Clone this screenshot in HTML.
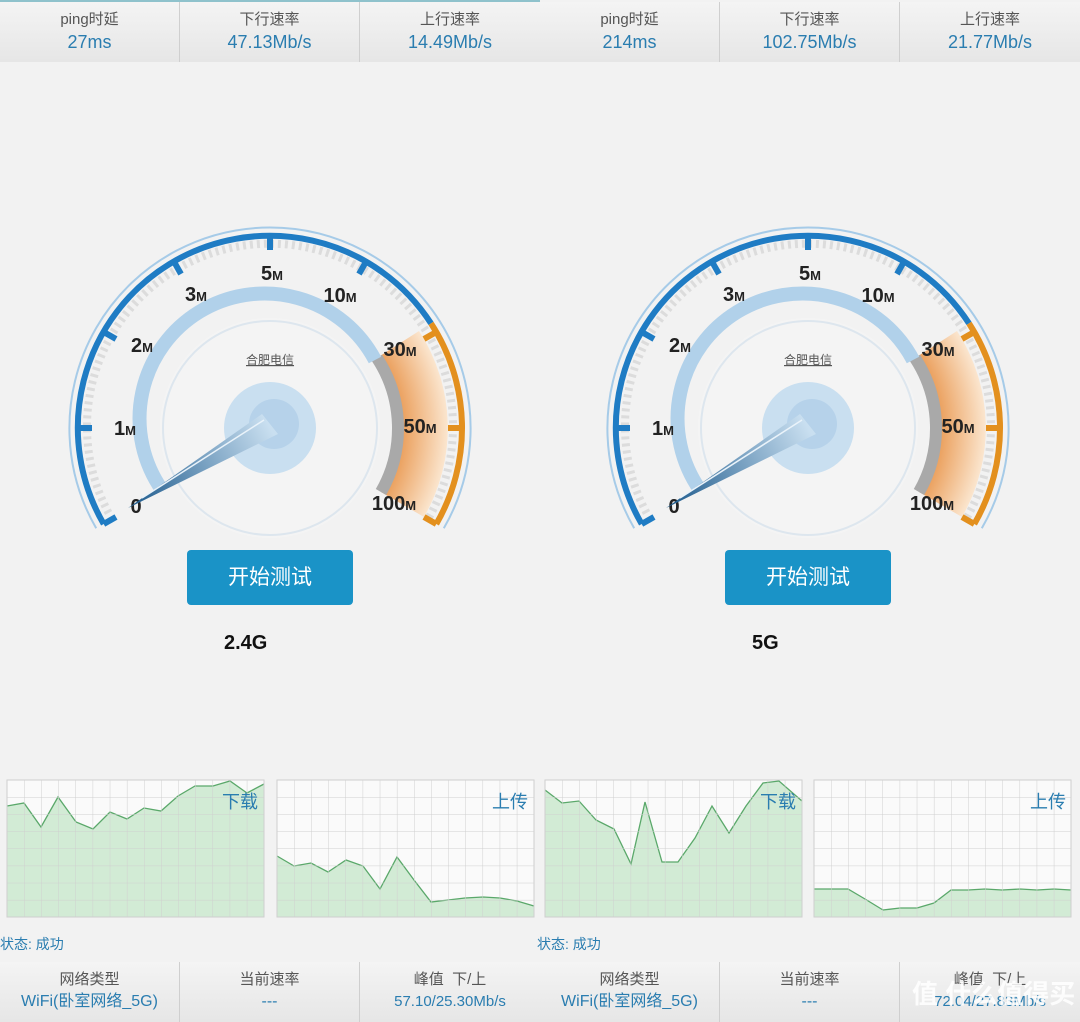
<!DOCTYPE html>
<html><head><meta charset="utf-8"><style>
body{margin:0;width:1080px;height:1021px;background:#f2f2f2;position:relative;overflow:hidden;font-family:"Liberation Sans","Noto Sans CJK SC",sans-serif}
.bar{position:absolute;left:0;width:1080px;height:60px;background:linear-gradient(#f4f4f4,#e6e6e6);display:flex}
.bar>div{width:180px;height:60px;text-align:center;border-right:1px solid #cfcfcf;box-sizing:border-box;padding-top:7px}
.bar>div:nth-child(3),.bar>div:nth-child(6){border-right:none}
.bar .l{color:#555;font-size:15px;line-height:21px}
.bar .v{color:#2a7db0;font-size:18px;line-height:24px}
.btn{position:absolute;top:550px;width:166px;height:55px;background:#1a93c7;border-radius:4px;color:#fff;font-size:21px;text-align:center;line-height:55px}
.lab{position:absolute;top:632px;font-size:20px;font-weight:bold;color:#111}
.st{position:absolute;top:934px;font-size:14px;color:#2a7db0}
.cl{position:absolute;top:788px;font-size:18px;color:#2a7db0}
</style></head><body>
<div style="position:absolute;left:0;top:0;width:540px;height:2px;background:#8fc2cc"></div>
<div class="bar" style="top:2px">
<div><div class="l">ping时延</div><div class="v">27ms</div></div>
<div><div class="l">下行速率</div><div class="v">47.13Mb/s</div></div>
<div><div class="l">上行速率</div><div class="v">14.49Mb/s</div></div>
<div><div class="l">ping时延</div><div class="v">214ms</div></div>
<div><div class="l">下行速率</div><div class="v">102.75Mb/s</div></div>
<div><div class="l">上行速率</div><div class="v">21.77Mb/s</div></div>
</div>

<svg width="1080" height="560" style="position:absolute;left:0;top:0">
<defs>
<radialGradient id="og" cx="0" cy="0" r="178" gradientUnits="userSpaceOnUse"><stop offset="0.7" stop-color="#e8944a"/><stop offset="1" stop-color="#fbe6cf"/></radialGradient>
<linearGradient id="nd" x1="0" y1="0" x2="-140" y2="78" gradientUnits="userSpaceOnUse"><stop offset="0" stop-color="#c9dff0"/><stop offset="1" stop-color="#1d5a8c"/></linearGradient>
<g id="gg">
<path d="M-173.8 100.3 A200.6 200.6 0 1 1 173.8 100.3" fill="none" stroke="#a6cbe8" stroke-width="2"/>
<path d="M-158 91 A183 183 0 1 1 158 91" fill="none" stroke="#dcdcdc" stroke-width="8" stroke-dasharray="3 4"/>
<path d="M149 -97 A178 178 0 0 1 154 89 L111 64 A128 128 0 0 0 107 -70Z" fill="url(#og)"/>
<path d="M107 -70 A128 128 0 0 1 111 64" fill="none" stroke="#a9a9a9" stroke-width="12"/>
<path d="M-108 62 A125 125 0 1 1 105 -68" fill="none" stroke="#b1d1ea" stroke-width="14"/>
<circle r="110" fill="#f4f4f4"/>
<circle r="107" fill="none" stroke="#dde6ee" stroke-width="2"/>
<path d="M-166.3 96 A192 192 0 0 1 161 -104.6" fill="none" stroke="#1f7cc4" stroke-width="6"/>
<path d="M161 -104.6 A192 192 0 0 1 166.3 96" fill="none" stroke="#e3901e" stroke-width="6"/>
<g stroke="#1f7cc4" stroke-width="6">
<line x1="-166.3" y1="96" x2="-154" y2="89"/><line x1="-192" y1="0" x2="-178" y2="0"/><line x1="-166.3" y1="-96" x2="-154" y2="-89"/><line x1="-96" y1="-166.3" x2="-89" y2="-154"/><line x1="0" y1="-192" x2="0" y2="-178"/><line x1="96" y1="-166.3" x2="89" y2="-154"/></g>
<g stroke="#e3901e" stroke-width="6"><line x1="166.3" y1="-96" x2="154" y2="-89"/><line x1="192" y1="0" x2="178" y2="0"/><line x1="166.3" y1="96" x2="154" y2="89"/></g>
<g font-family="Liberation Sans" font-weight="bold" font-size="20" fill="#222" text-anchor="middle">
<text x="-134" y="85">0</text>
<text x="-145" y="7">1<tspan font-size="13">M</tspan></text>
<text x="-128" y="-76">2<tspan font-size="13">M</tspan></text>
<text x="-74" y="-127">3<tspan font-size="13">M</tspan></text>
<text x="2" y="-148">5<tspan font-size="13">M</tspan></text>
<text x="70" y="-126">10<tspan font-size="13">M</tspan></text>
<text x="130" y="-72">30<tspan font-size="13">M</tspan></text>
<text x="150" y="5">50<tspan font-size="13">M</tspan></text>
<text x="124" y="82">100<tspan font-size="13">M</tspan></text>
</g>
<text x="0" y="-64" font-size="12" fill="#555" text-anchor="middle" text-decoration="underline" font-family="Noto Sans CJK SC">合肥电信</text>
<circle r="46" fill="#c9dff0"/><circle r="25" cx="4" cy="-4" fill="#b6d2ea"/>
<polygon points="-142,80 -8,-14 8,6" fill="url(#nd)"/>
<line x1="-128" y1="70" x2="-6" y2="-8" stroke="#eaf3fa" stroke-width="1.5"/>
</g>
</defs>
<use href="#gg" x="270" y="428"/>
<use href="#gg" x="808" y="428"/>
</svg>

<div class="btn" style="left:187px">开始测试</div>
<div class="btn" style="left:725px">开始测试</div>
<div class="lab" style="left:224px">2.4G</div>
<div class="lab" style="left:752px">5G</div>

<svg width="1080" height="150" style="position:absolute;left:0;top:775px">
<defs><pattern id="gr" width="17.13" height="17.13" patternUnits="userSpaceOnUse" x="0" y="0"><path d="M0 0H17.13M0 0V17.13" fill="none" stroke="#cfcfcf" stroke-width="1"/></pattern></defs>
<g transform="translate(7,5)">
<rect width="257" height="137" fill="#fafafa"/>
<polygon points="0,137 0,26 17,23 34,47 51,17 69,42 86,49 103,32 120,39 137,28 154,31 171,16 188,6 206,6 223,1 240,13 257,4 257,137" fill="#d2ebd5"/>
<polyline points="0,26 17,23 34,47 51,17 69,42 86,49 103,32 120,39 137,28 154,31 171,16 188,6 206,6 223,1 240,13 257,4" fill="none" stroke="#5aa86a" stroke-width="1.3"/>
<rect width="257" height="137" fill="url(#gr)" stroke="#cfcfcf"/>
</g>
<g transform="translate(277,5)">
<rect width="257" height="137" fill="#fafafa"/>
<polygon points="0,137 0,76 17,86 34,83 51,92 69,80 86,86 103,109 120,77 137,100 154,122 171,120 188,118 206,117 223,118 240,121 257,126 257,137" fill="#d2ebd5"/>
<polyline points="0,76 17,86 34,83 51,92 69,80 86,86 103,109 120,77 137,100 154,122 171,120 188,118 206,117 223,118 240,121 257,126" fill="none" stroke="#5aa86a" stroke-width="1.3"/>
<rect width="257" height="137" fill="url(#gr)" stroke="#cfcfcf"/>
</g>
<g transform="translate(545,5)">
<rect width="257" height="137" fill="#fafafa"/>
<polygon points="0,137 0,10 17,23 34,21 51,40 69,49 86,84 100,22 117,82 133,82 150,58 167,26 184,53 201,26 218,3 234,1 250,15 257,21 257,137" fill="#d2ebd5"/>
<polyline points="0,10 17,23 34,21 51,40 69,49 86,84 100,22 117,82 133,82 150,58 167,26 184,53 201,26 218,3 234,1 250,15 257,21" fill="none" stroke="#5aa86a" stroke-width="1.3"/>
<rect width="257" height="137" fill="url(#gr)" stroke="#cfcfcf"/>
</g>
<g transform="translate(814,5)">
<rect width="257" height="137" fill="#fafafa"/>
<polygon points="0,137 0,109 17,109 34,109 51,119 69,130 86,128 103,128 120,123 137,110 154,110 171,109 188,110 206,109 223,110 240,109 257,110 257,137" fill="#d2ebd5"/>
<polyline points="0,109 17,109 34,109 51,119 69,130 86,128 103,128 120,123 137,110 154,110 171,109 188,110 206,109 223,110 240,109 257,110" fill="none" stroke="#5aa86a" stroke-width="1.3"/>
<rect width="257" height="137" fill="url(#gr)" stroke="#cfcfcf"/>
</g>
</svg>
<div class="cl" style="left:222px">下载</div>
<div class="cl" style="left:492px">上传</div>
<div class="cl" style="left:760px">下载</div>
<div class="cl" style="left:1030px">上传</div>

<div class="st" style="left:0">状态: 成功</div>
<div class="st" style="left:537px">状态: 成功</div>

<div class="bar" style="top:962px">
<div><div class="l">网络类型</div><div class="v" style="font-size:16px">WiFi(卧室网络_5G)</div></div>
<div><div class="l">当前速率</div><div class="v" style="font-size:16px">---</div></div>
<div><div class="l">峰值&nbsp; 下/上</div><div class="v" style="font-size:15px">57.10/25.30Mb/s</div></div>
<div><div class="l">网络类型</div><div class="v" style="font-size:16px">WiFi(卧室网络_5G)</div></div>
<div><div class="l">当前速率</div><div class="v" style="font-size:16px">---</div></div>
<div><div class="l">峰值&nbsp; 下/上</div><div class="v" style="font-size:15px">72.04/27.83Mb/s</div></div>
</div>
<div style="position:absolute;left:912px;top:974px;font-size:26px;white-space:nowrap;color:rgba(255,255,255,0.85);font-weight:bold">值 什么值得买</div>
</body></html>
